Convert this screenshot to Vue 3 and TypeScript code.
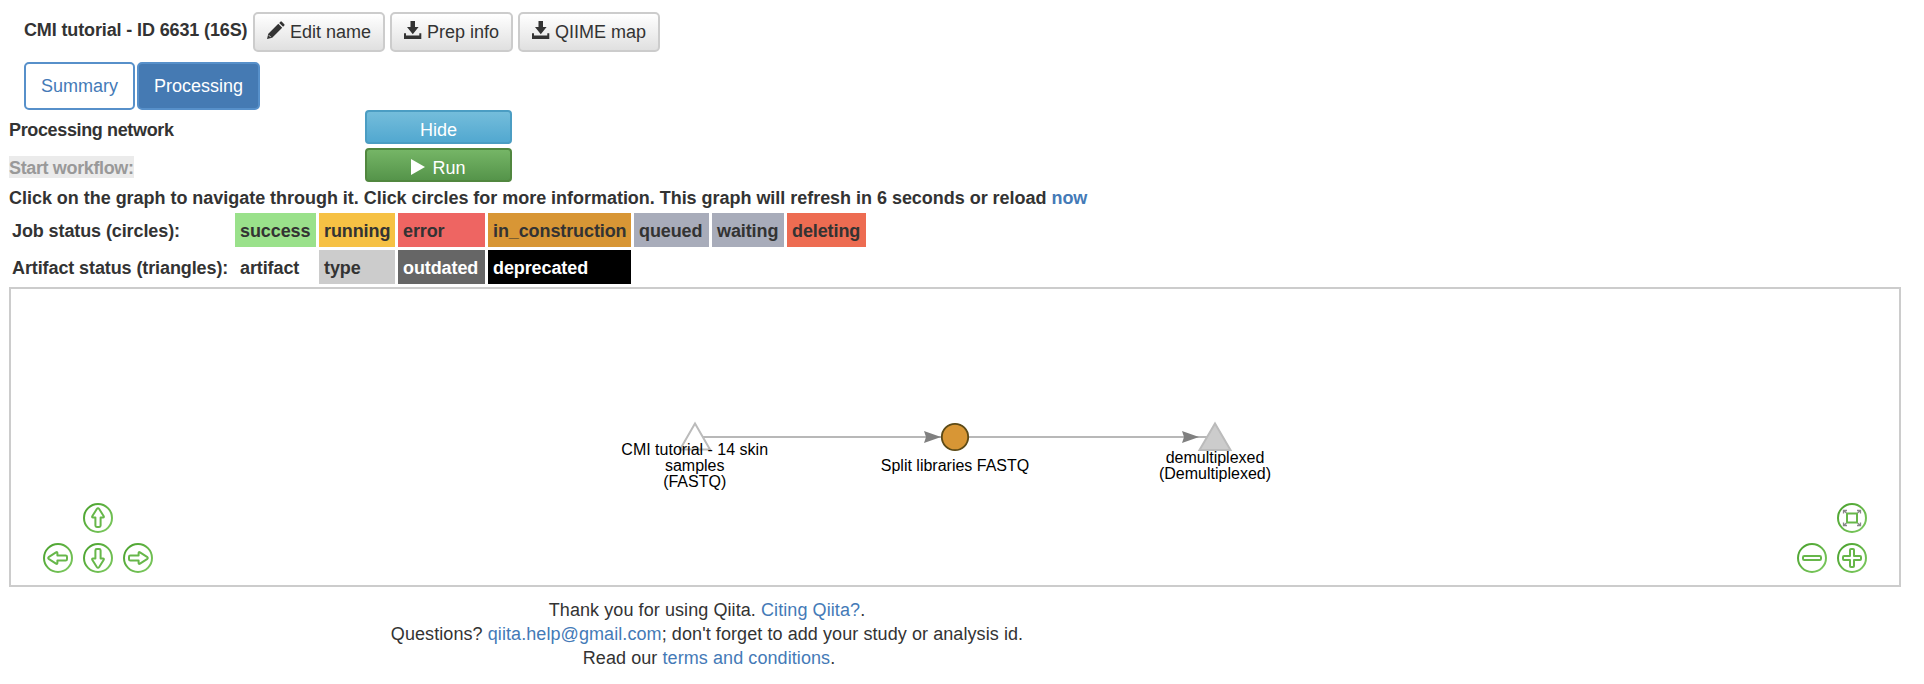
<script setup lang="ts">
interface LegendCell {
  label: string
  tone: string
}

const jobStatuses: LegendCell[] = [
  { label: 'success', tone: 'success' },
  { label: 'running', tone: 'running' },
  { label: 'error', tone: 'error' },
  { label: 'in_construction', tone: 'construction' },
  { label: 'queued', tone: 'idle' },
  { label: 'waiting', tone: 'idle' },
  { label: 'deleting', tone: 'deleting' },
]

const artifactStatuses: LegendCell[] = [
  { label: 'artifact', tone: 'artifact' },
  { label: 'type', tone: 'type' },
  { label: 'outdated', tone: 'outdated' },
  { label: 'deprecated', tone: 'deprecated' },
]

const arrowPath =
  'M-1.2 -9 Q0 -10.6 1.2 -9 L5.6 -2 Q6.4 -.6 5 -.6 H2.6 V7.6 Q2.6 9 1.2 9 H-1.2 Q-2.6 9 -2.6 7.6 V-.6 H-5 Q-6.4 -.6 -5.6 -2 Z'

const arrows = [
  { name: 'up', x: 98, y: 518, angle: 0 },
  { name: 'left', x: 58, y: 558, angle: -90 },
  { name: 'down', x: 98, y: 558, angle: 180 },
  { name: 'right', x: 138, y: 558, angle: 90 },
]
</script>

<template>
  <main class="page">
    <header class="title-row">
      <strong class="title">CMI tutorial - ID 6631 (16S)</strong>
      <button class="btn edit">
        <svg class="icon" viewBox="0 0 18 18"><path d="M0 18 1.3 12.8 11.3 2.8 15.2 6.7 5.2 16.7ZM12.2 1.9 13.4.7Q14.1 0 14.8.7L17.3 3.2Q18 3.9 17.3 4.6L16.1 5.8Z" /><path d="M1.8 14.2 3.8 16.2" stroke="#eee" stroke-width=".9" /></svg>
        <span>Edit name</span>
      </button>
      <button class="btn prep">
        <svg class="icon" viewBox="0 0 18 18"><path d="M6.5 0H11V6H14.6L8.8 13.2 3 6H6.5ZM0 12.2H2V14.6H15.3V12.2H17.3V18H0Z" /></svg>
        <span>Prep info</span>
      </button>
      <button class="btn map">
        <svg class="icon" viewBox="0 0 18 18"><path d="M6.5 0H11V6H14.6L8.8 13.2 3 6H6.5ZM0 12.2H2V14.6H15.3V12.2H17.3V18H0Z" /></svg>
        <span>QIIME map</span>
      </button>
    </header>

    <nav class="tabs">
      <button class="tab summary">Summary</button>
      <button class="tab processing">Processing</button>
    </nav>

    <section class="controls">
      <strong>Processing network</strong>
      <button class="action hide">Hide</button>
      <strong><span class="disabled">Start workflow:</span></strong>
      <button class="action run">
        <svg class="play" viewBox="0 0 14 16"><path d="M0 0 14 8 0 16Z" /></svg>
        <span>Run</span>
      </button>
    </section>

    <p class="hint">Click on the graph to navigate through it. Click circles for more information. This graph will refresh in 6 seconds or reload <a>now</a></p>

    <section class="legend">
      <div class="legend-row">
        <span class="legend-name">Job status (circles):</span>
        <span v-for="cell in jobStatuses" :key="cell.label" :class="['cell', cell.tone]">{{ cell.label }}</span>
      </div>
      <div class="legend-row">
        <span class="legend-name">Artifact status (triangles):</span>
        <span v-for="cell in artifactStatuses" :key="cell.label" :class="['cell', cell.tone]">{{ cell.label }}</span>
      </div>
    </section>

    <section class="network">
      <svg class="graph" viewBox="11 289 1888 296">
        <defs>
          <linearGradient id="green" x1="0" y1="0" x2="1" y2="1">
            <stop offset="0" stop-color="#48a02b" />
            <stop offset="1" stop-color="#7fcb62" />
          </linearGradient>
          <g id="ring"><circle r="14" fill="#fff" stroke="url(#green)" stroke-width="2" /></g>
        </defs>
        <path class="edge" d="M695 437H941M955 437H1215" />
        <path class="head" d="M924 431 941 437 924 443 926 437ZM1182 431 1199 437 1182 443 1184 437Z" />
        <path class="open-node" d="M695 423.5 710 449.5H680Z" />
        <path class="type-node" d="M1215 423.5 1230.5 450H1199.5Z" />
        <circle class="job-node" cx="955" cy="437" r="13.2" />
        <g class="labels">
          <text x="694.7" y="455">CMI tutorial - 14 skin</text>
          <text x="694.7" y="471">samples</text>
          <text x="694.7" y="487">(FASTQ)</text>
          <text x="955" y="471">Split libraries FASTQ</text>
          <text x="1215" y="463">demultiplexed</text>
          <text x="1215" y="479">(Demultiplexed)</text>
        </g>
        <g v-for="arrow in arrows" :key="arrow.name" :transform="`translate(${arrow.x} ${arrow.y})`">
          <use href="#ring" />
          <path class="glyph" :d="arrowPath" :transform="`rotate(${arrow.angle})`" />
        </g>
        <g transform="translate(1852 518)">
          <use href="#ring" />
          <rect class="glyph" x="-5" y="-4.5" width="10" height="9" />
          <path class="expand" d="M-5.5 -5 -8.5 -7.5M-8.5 -4.5V-7.5H-5M5.5 -5 8.5 -7.5M5 -7.5H8.5V-4.5M-5.5 5 -8.5 7.5M-8.5 4.5V7.5H-5M5.5 5 8.5 7.5M8.5 4.5V7.5H5" />
        </g>
        <g transform="translate(1812 558)">
          <use href="#ring" />
          <rect class="glyph" x="-9" y="-2" width="18" height="4" rx="1.3" />
        </g>
        <g transform="translate(1852 558)">
          <use href="#ring" />
          <path class="glyph" d="M-2 -2V-8Q-2 -9 -1 -9H1Q2 -9 2 -8V-2H8Q9 -2 9 -1V1Q9 2 8 2H2V8Q2 9 1 9H-1Q-2 9 -2 8V2H-8Q-9 2 -9 1V-1Q-9 -2 -8 -2Z" />
        </g>
      </svg>
    </section>

    <footer class="footer">
      <div>Thank you for using Qiita. <a>Citing Qiita?</a>.</div>
      <div>Questions? <a>qiita.help@gmail.com</a>; don't forget to add your study or analysis id.</div>
      <div class="terms">Read our <a>terms and conditions</a>.</div>
    </footer>
  </main>
</template>

<style>
body {
  margin: 0;
  background: #fff;
}
</style>

<style scoped>
.page {
  box-sizing: border-box;
  height: 684px;
  padding: 12px 23px 0 9px;
  overflow: hidden;
  color: #333;
  font: 18px/24px "Liberation Sans", Arial, sans-serif;
}
a {
  color: #447ab7;
}
button {
  box-sizing: border-box;
  display: flex;
  align-items: center;
  justify-content: center;
  margin: 0;
  padding: 0;
  font: inherit;
  white-space: nowrap;
}
.title-row {
  display: flex;
  height: 40px;
  padding-left: 15px;
}
.title {
  width: 229px;
  padding-top: 6px;
  box-sizing: border-box;
  letter-spacing: -0.13px;
  white-space: nowrap;
}
.btn {
  height: 40px;
  margin-right: 5px;
  gap: 5px;
  color: #333;
  background: linear-gradient(#fff, #e0e0e0);
  border: 2px solid #ccc;
  border-radius: 5px;
}
.edit { width: 132px; }
.prep { width: 123px; }
.map { width: 142px; }
.icon {
  width: 18px;
  height: 18px;
  margin-top: -4px;
  fill: #333;
}
.tabs {
  display: flex;
  gap: 2px;
  padding: 10px 0 0 15px;
}
.tab {
  height: 48px;
  border: 2px solid #5790ca;
  border-radius: 5px;
}
.summary {
  width: 111px;
  color: #447ab7;
  background: #fff;
}
.processing {
  width: 123px;
  color: #fff;
  background: #457ab3;
}
.controls {
  display: grid;
  grid-template-columns: 356px 147px;
  grid-template-rows: 34px 34px;
  row-gap: 4px;
}
.controls strong {
  padding-top: 8px;
  letter-spacing: -0.36px;
}
.disabled {
  display: block;
  width: max-content;
  height: 22px;
  color: #999;
  background: #ebebeb;
}
.action {
  height: 34px;
  padding-top: 5px;
  color: #fff;
  border-radius: 4px;
}
.hide {
  background: linear-gradient(#74bddb, #52a8d0);
  border: 2px solid #4b9dc3;
}
.run {
  gap: 7px;
  background: linear-gradient(#75b566, #55944a);
  border: 2px solid #51873f;
}
.play {
  width: 14px;
  height: 16px;
  margin-top: -2px;
  fill: #fff;
}
.hint {
  margin: 4px 0 0;
  font-weight: bold;
  letter-spacing: -0.03px;
  white-space: nowrap;
}
.legend {
  display: grid;
  gap: 3px;
  padding: 3px 0 0 3px;
}
.legend-row {
  display: grid;
  grid-template-columns: 220px 81px 76px 87px 143px 75px 72px 79px;
  grid-template-rows: 34px;
  column-gap: 3px;
  font-weight: bold;
  line-height: 34px;
  letter-spacing: -0.1px;
  white-space: nowrap;
}
.legend-name,
.cell {
  box-sizing: border-box;
  height: 34px;
  padding-top: 1px;
}
.cell { padding-left: 5px; }
.success { background: #9ae18b; }
.running { background: #f6c144; }
.error { background: #ee6562; }
.construction { background: #d89635; }
.idle { background: #a8acba; }
.deleting { background: #ed6c52; }
.type { background: #ccc; }
.outdated { color: #fff; background: #666; }
.deprecated { color: #fff; background: #000; }
.network {
  height: 296px;
  margin-top: 3px;
  border: 2px solid #ccc;
}
.graph {
  display: block;
  width: 1888px;
  height: 296px;
}
.edge {
  fill: none;
  stroke: #b8b8b8;
  stroke-width: 2;
}
.head { fill: #808080; }
.open-node {
  fill: #fff;
  stroke: #bbb;
  stroke-width: 2;
}
.type-node {
  fill: #ccc;
  stroke: #bbb;
  stroke-width: 2;
}
.job-node {
  fill: #d89635;
  stroke: #5c4a17;
  stroke-width: 1.8;
}
.labels {
  fill: #000;
  font-size: 16px;
  text-anchor: middle;
}
.glyph {
  fill: #fff;
  stroke: #67b74a;
  stroke-width: 2;
  stroke-linejoin: round;
}
.expand {
  fill: none;
  stroke: #888;
  stroke-width: 1.3;
}
.footer {
  width: 1396px;
  margin-top: 11px;
  letter-spacing: 0.08px;
  text-align: center;
}
.terms {
  padding-left: 4px;
}
</style>
